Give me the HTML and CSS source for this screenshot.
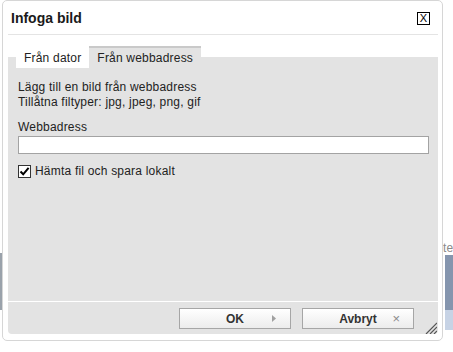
FILE: index.html
```html
<!DOCTYPE html>
<html lang="sv">
  <head>
    <meta charset="UTF-8" />
    <title>Infoga bild</title>
    <link rel="stylesheet" href="styles.css">
  </head>
  <body>
    <div class="desk-left"><div class="desk-left-bar"></div></div>
    <div class="dialog">
      <div class="dialog-title">
        <span class="dialog-caption">Infoga bild</span>
        <span class="dialog-close">X</span>
      </div>
      <div class="tabs">
        <span class="tab">Från dator</span>
        <span class="tab tab-active">Från webbadress</span>
      </div>
      <div class="panel">
        <p class="intro">Lägg till en bild från webbadress<br>Tillåtna filtyper: jpg, jpeg, png, gif</p>
        <label class="field-label" for="url">Webbadress</label>
        <input class="field-input" id="url" type="text" />
        <label class="check">
          <span class="check-box">
            <svg width="11" height="11" viewBox="0 0 11 11"><path d="M1.5 5.5 L4.2 8.3 L9.6 1.8" fill="none" stroke="#000" stroke-width="2"/></svg>
          </span>
          Hämta fil och spara lokalt
        </label>
      </div>
      <div class="dialog-footer">
        <button class="btn" type="button">
          <span></span>
          <b>OK</b>
          <svg class="btn-icon" width="4" height="7" viewBox="0 0 4 7"><polygon points="0,0 4,3.5 0,7" fill="#a0a0a0"/></svg>
        </button>
        <button class="btn" type="button">
          <span></span>
          <b>Avbryt</b>
          <span class="btn-x">×</span>
        </button>
        <svg class="grip" width="12" height="12" viewBox="0 0 12 12">
          <path d="M1 12 L12 1 M5 12 L12 5 M9 12 L12 9" stroke="#555" stroke-width="1.2"/>
        </svg>
      </div>
    </div>
    <div class="desk-right">
      <div class="desk-text">te</div>
      <div class="desk-bar"></div>
      <div class="desk-bar-light"></div>
    </div>
  </body>
</html>
```

FILE: styles.css
```css
body {
  margin: 0;
  display: flex;
  align-items: flex-start;
  background: #ffffff;
  font-family: "Liberation Sans", Arial, sans-serif;
  font-size: 12px;
  letter-spacing: 0.2px;
  color: #222222;
}
.desk-left {
  width: 2px;
  height: 352px;
}
.desk-left-bar {
  margin-top: 253px;
  height: 57px;
  background: #9aa2ab;
}
.desk-right {
  flex: 1;
  height: 352px;
  overflow: hidden;
}
.desk-text {
  margin-top: 241px;
  height: 14px;
  line-height: 14px;
  color: #8a8a8a;
  white-space: nowrap;
}
.desk-bar {
  margin-left: 2px;
  height: 55px;
  background: #8595ae;
}
.desk-bar-light {
  margin-left: 2px;
  height: 20px;
  background: #c7d3e5;
}
.dialog {
  width: 441px;
  height: 341px;
  box-sizing: border-box;
  border: 1px solid #d6d6d6;
  border-radius: 5px;
  background: #ffffff;
  padding: 0 4px 6px 5px;
  display: flex;
  flex-direction: column;
}
.dialog-title {
  height: 33px;
  border-bottom: 1px solid #e4e4e4;
  display: flex;
  align-items: center;
  justify-content: space-between;
  padding: 0 8px 0 3px;
}
.dialog-caption {
  font-size: 14px;
  font-weight: bold;
  letter-spacing: 0;
  color: #1a1a1a;
}
.dialog-close {
  width: 11px;
  height: 11px;
  margin-top: 2px;
  border: 1px solid #000000;
  font-size: 11px;
  line-height: 11px;
  letter-spacing: 0;
  text-align: center;
  color: #000000;
}
.tabs {
  margin-top: 11px;
  height: 22px;
  display: flex;
  background: linear-gradient(#ffffff 11px, #e3e3e3 11px);
}
.tab {
  padding: 0 8px;
  border-top: 2px solid #ffffff;
  line-height: 20px;
  background: #ffffff;
}
.tab:first-child {
  margin-left: 8px;
}
.tab-active {
  background: #e3e3e3;
  border-top-color: #c9c9c9;
}
.panel {
  flex: 1;
  background: #e3e3e3;
  padding: 12px 9px 0 10px;
  display: flex;
  flex-direction: column;
  align-items: flex-start;
}
.intro {
  margin: 0;
  line-height: 15px;
}
.field-label {
  margin-top: 10px;
  line-height: 15px;
}
.field-input {
  margin: 1px 0 0;
  width: 411px;
  height: 18px;
  box-sizing: border-box;
  border: 1px solid #a3a3a3;
  background: #ffffff;
  padding: 0 3px;
}
.check {
  margin-top: 10px;
  display: flex;
  align-items: center;
  gap: 4px;
  line-height: 15px;
}
.check-box {
  width: 11px;
  height: 11px;
  border: 1px solid #333333;
  background: #ffffff;
  display: flex;
}
.dialog-footer {
  height: 33px;
  box-sizing: border-box;
  border-top: 1px solid #ffffff;
  background: #e3e3e3;
  border-radius: 0 0 4px 4px;
  display: flex;
  align-items: flex-start;
  justify-content: flex-end;
  padding: 6px 1px 0 0;
}
.btn {
  width: 112px;
  height: 21px;
  margin-left: 11px;
  padding: 0 13px 0 0;
  border: 1px solid #a6a6a6;
  background: linear-gradient(#ffffff, #ececec);
  display: grid;
  grid-template-columns: 1fr auto 1fr;
  align-items: center;
  font-family: "Liberation Sans", Arial, sans-serif;
  font-size: 12px;
  color: #333333;
}
.btn b {
  padding-left: 13px;
}
.btn-icon {
  justify-self: end;
  margin-right: 1px;
}
.btn-x {
  justify-self: end;
  color: #8a8a8a;
  font-size: 13px;
}
.grip {
  align-self: flex-end;
  margin-left: 11px;
}
```
